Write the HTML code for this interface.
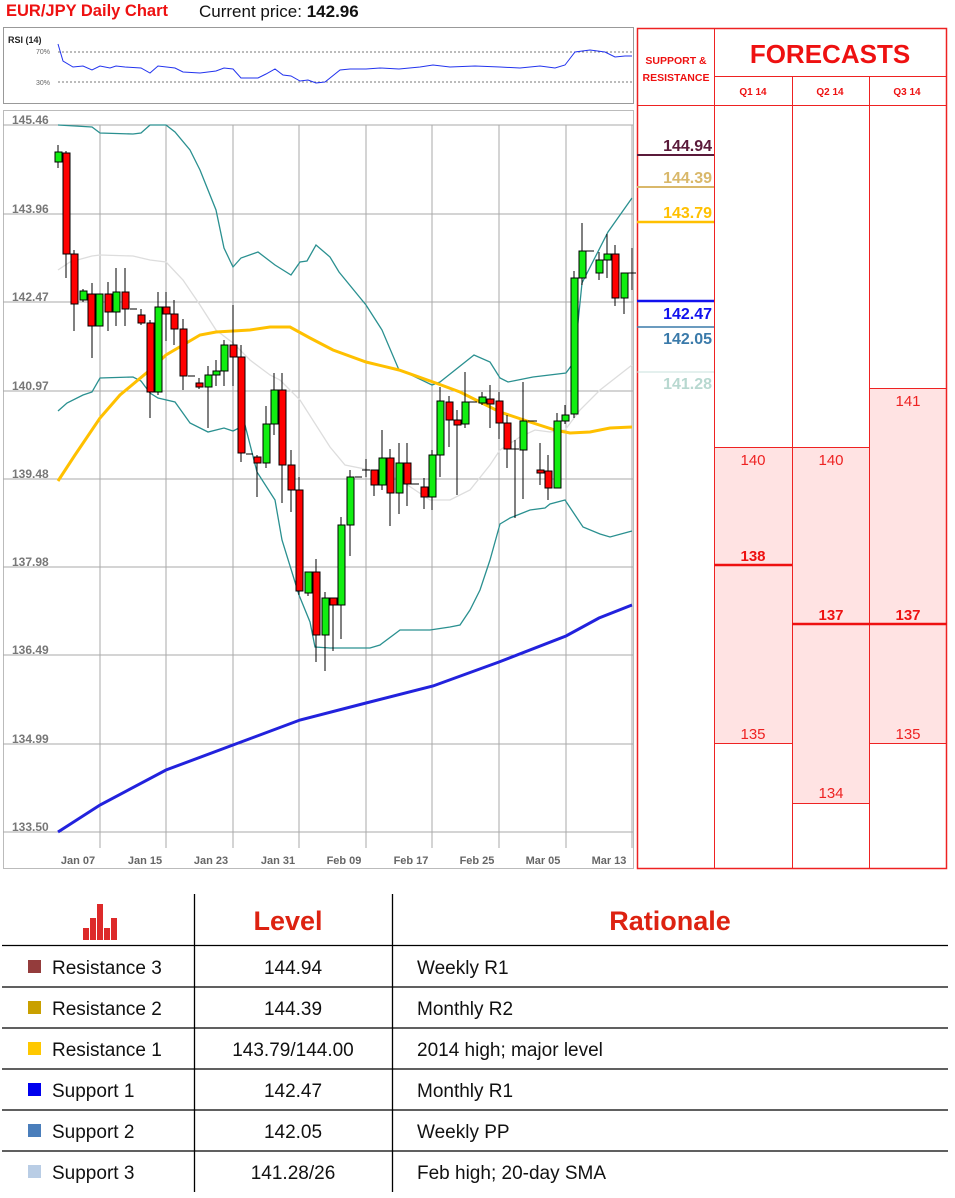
<!DOCTYPE html>
<html><head><meta charset="utf-8"><style>
html,body{margin:0;padding:0;background:#fff;width:955px;height:1198px;overflow:hidden;font-family:"Liberation Sans",sans-serif}
.a{position:absolute}
</style></head><body>
<div class="a" style="left:6px;top:2px;font-size:16.5px;font-weight:bold;color:#ee1111">EUR/JPY Daily Chart</div>
<div class="a" style="left:199px;top:2px;font-size:17px;color:#111">Current price: <b>142.96</b></div>

<svg class="a" style="left:0;top:0" width="955" height="880" xmlns="http://www.w3.org/2000/svg" font-family="Liberation Sans, sans-serif">
<!-- RSI -->
<rect x="3.5" y="27.5" width="630" height="76" fill="#fff" stroke="#999"/>
<text x="8" y="43" font-size="9" font-weight="bold" fill="#222">RSI (14)</text>
<text x="36" y="54" font-size="7" fill="#666">70%</text>
<text x="36" y="85" font-size="7" fill="#666">30%</text>
<line x1="58" y1="52" x2="633" y2="52" stroke="#777" stroke-dasharray="2,2"/>
<line x1="58" y1="82" x2="633" y2="82" stroke="#777" stroke-dasharray="2,2"/>
<polyline fill="none" stroke="#2233ee" stroke-width="1" points="58,44 63,61 73,67 83,66 92,70 100,66 110,68 116,66 125,67 141,68 150,73 158,66 175,68 183,72 200,73 216,71 224,68 233,69 241,78 258,78 266,74 275,69 283,75 291,76 300,81 308,80 316,83 325,82 340,70 350,69 366,69 380,68 399,69 420,67 433,65 450,67 475,66 500,67 520,68 540,66 555,68 565,65 575,52 590,50 605,52 615,57 625,56 632,56"/>
<!-- main chart -->
<rect x="3.5" y="110.5" width="630" height="758" fill="#fff" stroke="#bbb"/>
<g stroke="#aaa" stroke-width="1">
<line x1="3" y1="125" x2="633" y2="125"/><line x1="3" y1="214" x2="633" y2="214"/><line x1="3" y1="302" x2="633" y2="302"/><line x1="3" y1="391" x2="633" y2="391"/><line x1="3" y1="479" x2="633" y2="479"/><line x1="3" y1="567" x2="633" y2="567"/><line x1="3" y1="655" x2="633" y2="655"/><line x1="3" y1="744" x2="633" y2="744"/><line x1="3" y1="832" x2="633" y2="832"/>
<line x1="100" y1="125" x2="100" y2="848"/><line x1="166" y1="125" x2="166" y2="848"/><line x1="233" y1="125" x2="233" y2="848"/><line x1="299" y1="125" x2="299" y2="848"/><line x1="366" y1="125" x2="366" y2="848"/><line x1="432" y1="125" x2="432" y2="848"/><line x1="499" y1="125" x2="499" y2="848"/><line x1="566" y1="125" x2="566" y2="848"/><line x1="632" y1="125" x2="632" y2="848"/>
</g>
<g font-size="12" font-weight="bold" fill="#777">
<text x="12" y="124">145.46</text><text x="12" y="213">143.96</text><text x="12" y="301">142.47</text><text x="12" y="390">140.97</text><text x="12" y="478">139.48</text><text x="12" y="566">137.98</text><text x="12" y="654">136.49</text><text x="12" y="743">134.99</text><text x="12" y="831">133.50</text>
</g>
<g font-size="11" font-weight="bold" fill="#666" text-anchor="middle">
<text x="78" y="864">Jan 07</text><text x="145" y="864">Jan 15</text><text x="211" y="864">Jan 23</text><text x="278" y="864">Jan 31</text><text x="344" y="864">Feb 09</text><text x="411" y="864">Feb 17</text><text x="477" y="864">Feb 25</text><text x="543" y="864">Mar 05</text><text x="609" y="864">Mar 13</text>
</g>
<polyline fill="none" stroke="#ddd" stroke-width="1.3" points="58,270 70,262 92,256 100,255 133,256 150,260 166,262 183,280 200,305 216,330 233,343 250,360 270,375 280,380 300,400 330,447 345,465 370,470 400,480 430,500 450,500 470,490 490,465 500,450 520,437 535,430 550,432 565,430 580,410 600,390 632,365"/>
<polyline fill="none" stroke="#2a9090" stroke-width="1.3" points="58,125 92,127 100,133 133,134 141,133 150,125 166,125 175,132 190,150 200,170 216,210 224,248 233,267 241,258 258,252 275,265 291,275 300,262 307,261 316,245 330,257 339,272 366,305 382,330 399,370 405,372 432,385 440,382 474,355 490,362 500,378 508,382 533,377 566,373 574,362 582,283 608,232 632,198"/>
<polyline fill="none" stroke="#2a9090" stroke-width="1.3" points="58,411 67,403 83,395 92,392 100,378 133,377 141,381 150,393 158,398 175,402 190,423 208,432 224,428 233,431 245,425 257,472 275,500 282,540 299,595 310,622 315,647 330,648 350,648 370,648 380,645 400,630 430,630 450,627 460,625 470,610 480,590 490,560 500,524 510,518 530,510 545,508 550,504 565,500 575,515 583,527 600,534 610,537 632,531"/>
<polyline fill="none" stroke="#ffc000" stroke-width="3" points="58,481 75,455 100,418 120,395 150,370 166,355 183,345 200,335 216,332 233,331 250,330 270,327 290,327 310,338 333,350 366,362 399,370 433,382 460,392 480,402 500,412 530,422 555,430 570,433 590,432 610,428 632,427"/>
<polyline fill="none" stroke="#2222dd" stroke-width="3" points="58,832 100,805 166,770 233,745 300,720 366,703 433,686 499,662 566,636 599,618 632,605"/>
<g stroke="#000" stroke-width="1">
<line x1="58" y1="145" x2="58" y2="168"/><line x1="66" y1="151" x2="66" y2="278"/><line x1="74" y1="250" x2="74" y2="331"/><line x1="83" y1="289" x2="83" y2="302"/><line x1="92" y1="283" x2="92" y2="358"/><line x1="108" y1="282" x2="108" y2="331"/><line x1="116" y1="268" x2="116" y2="326"/><line x1="125" y1="268" x2="125" y2="326"/><line x1="130" y1="309" x2="137" y2="309"/><line x1="141" y1="309" x2="141" y2="325"/><line x1="150" y1="320" x2="150" y2="418"/><line x1="158" y1="292" x2="158" y2="395"/><line x1="166" y1="292" x2="166" y2="341"/><line x1="174" y1="300" x2="174" y2="345"/><line x1="183" y1="319" x2="183" y2="390"/><line x1="188" y1="376" x2="195" y2="376"/><line x1="199" y1="378" x2="199" y2="389"/><line x1="208" y1="366" x2="208" y2="428"/><line x1="216" y1="360" x2="216" y2="386"/><line x1="224" y1="340" x2="224" y2="386"/><line x1="233" y1="305" x2="233" y2="386"/><line x1="241" y1="345" x2="241" y2="462"/><line x1="246" y1="454" x2="253" y2="454"/><line x1="257" y1="455" x2="257" y2="497"/><line x1="266" y1="406" x2="266" y2="468"/><line x1="274" y1="373" x2="274" y2="435"/><line x1="282" y1="373" x2="282" y2="503"/><line x1="291" y1="450" x2="291" y2="512"/><line x1="299" y1="477" x2="299" y2="595"/><line x1="308" y1="572" x2="308" y2="596"/><line x1="316" y1="559" x2="316" y2="662"/><line x1="325" y1="592" x2="325" y2="671"/><line x1="333" y1="598" x2="333" y2="651"/><line x1="341" y1="517" x2="341" y2="639"/><line x1="350" y1="470" x2="350" y2="556"/><line x1="355" y1="477" x2="362" y2="477"/><line x1="366" y1="459" x2="366" y2="477"/><line x1="362" y1="470" x2="370" y2="470"/><line x1="374" y1="470" x2="374" y2="496"/><line x1="382" y1="430" x2="382" y2="490"/><line x1="390" y1="449" x2="390" y2="526"/><line x1="399" y1="443" x2="399" y2="514"/><line x1="407" y1="443" x2="407" y2="506"/><line x1="411" y1="484" x2="419" y2="484"/><line x1="424" y1="478" x2="424" y2="509"/><line x1="432" y1="450" x2="432" y2="510"/><line x1="440" y1="387" x2="440" y2="477"/><line x1="449" y1="396" x2="449" y2="447"/><line x1="457" y1="410" x2="457" y2="495"/><line x1="465" y1="372" x2="465" y2="428"/><line x1="469" y1="402" x2="477" y2="402"/><line x1="482" y1="392" x2="482" y2="405"/><line x1="490" y1="385" x2="490" y2="428"/><line x1="499" y1="392" x2="499" y2="439"/><line x1="507" y1="415" x2="507" y2="468"/><line x1="515" y1="440" x2="515" y2="518"/><line x1="511" y1="449" x2="519" y2="449"/><line x1="523" y1="382" x2="523" y2="499"/><line x1="528" y1="421" x2="537" y2="421"/><line x1="540" y1="443" x2="540" y2="485"/><line x1="548" y1="455" x2="548" y2="500"/><line x1="557" y1="413" x2="557" y2="488"/><line x1="565" y1="405" x2="565" y2="424"/><line x1="574" y1="271" x2="574" y2="418"/><line x1="582" y1="223" x2="582" y2="285"/><line x1="586" y1="251" x2="594" y2="251"/><line x1="599" y1="252" x2="599" y2="280"/><line x1="607" y1="234" x2="607" y2="278"/><line x1="615" y1="245" x2="615" y2="306"/><line x1="624" y1="273" x2="624" y2="314"/><line x1="632" y1="248" x2="632" y2="290"/><line x1="628" y1="273" x2="636" y2="273"/>
</g>
<g stroke="#000" stroke-width="1">
<g fill="#11ee11">
<rect x="55" y="152" width="7" height="10"/><rect x="80" y="291" width="7" height="9"/><rect x="96" y="294" width="7" height="32"/><rect x="113" y="292" width="7" height="20"/><rect x="155" y="307" width="7" height="85"/><rect x="205" y="375" width="7" height="12"/><rect x="213" y="371" width="7" height="4"/><rect x="221" y="345" width="7" height="26"/><rect x="263" y="424" width="7" height="39"/><rect x="271" y="390" width="7" height="34"/><rect x="305" y="572" width="7" height="21"/><rect x="322" y="598" width="7" height="37"/><rect x="338" y="525" width="7" height="80"/><rect x="347" y="477" width="7" height="48"/><rect x="379" y="458" width="7" height="27"/><rect x="396" y="463" width="7" height="30"/><rect x="429" y="455" width="7" height="42"/><rect x="437" y="401" width="7" height="54"/><rect x="462" y="402" width="7" height="22"/><rect x="479" y="397" width="7" height="6"/><rect x="520" y="421" width="7" height="29"/><rect x="554" y="421" width="7" height="67"/><rect x="562" y="415" width="7" height="6"/><rect x="571" y="278" width="7" height="136"/><rect x="579" y="251" width="7" height="27"/><rect x="596" y="260" width="7" height="13"/><rect x="604" y="254" width="7" height="6"/><rect x="621" y="273" width="7" height="25"/>
</g>
<g fill="#ff0000">
<rect x="63" y="153" width="7" height="101"/><rect x="71" y="254" width="7" height="50"/><rect x="88" y="294" width="7" height="32"/><rect x="105" y="294" width="7" height="18"/><rect x="122" y="292" width="7" height="17"/><rect x="138" y="315" width="7" height="8"/><rect x="147" y="323" width="7" height="69"/><rect x="163" y="307" width="7" height="7"/><rect x="171" y="314" width="7" height="15"/><rect x="180" y="329" width="7" height="47"/><rect x="196" y="383" width="7" height="4"/><rect x="230" y="345" width="7" height="12"/><rect x="238" y="357" width="7" height="96"/><rect x="254" y="457" width="7" height="6"/><rect x="279" y="390" width="7" height="75"/><rect x="288" y="465" width="7" height="25"/><rect x="296" y="490" width="7" height="101"/><rect x="313" y="572" width="7" height="63"/><rect x="330" y="598" width="7" height="7"/><rect x="371" y="470" width="7" height="15"/><rect x="387" y="458" width="7" height="35"/><rect x="404" y="463" width="7" height="21"/><rect x="421" y="487" width="7" height="10"/><rect x="446" y="402" width="7" height="18"/><rect x="454" y="420" width="7" height="5"/><rect x="487" y="399" width="7" height="5"/><rect x="496" y="401" width="7" height="22"/><rect x="504" y="423" width="7" height="26"/><rect x="537" y="470" width="7" height="3"/><rect x="545" y="471" width="7" height="17"/><rect x="612" y="254" width="7" height="44"/>
</g></g>

<!-- right table -->
<rect x="714" y="447" width="78" height="296" fill="#ffe3e3"/>
<rect x="792" y="447" width="77" height="356" fill="#ffe3e3"/>
<rect x="869" y="388" width="77" height="355" fill="#ffe3e3"/>
<g stroke="#ee2222" stroke-width="1" fill="none">
<rect x="637.5" y="28.5" width="309" height="840" stroke-width="1.5"/>
<line x1="714.5" y1="28" x2="714.5" y2="869"/>
<line x1="714" y1="76.5" x2="947" y2="76.5"/>
<line x1="637" y1="105.5" x2="947" y2="105.5"/>
<line x1="792.5" y1="76" x2="792.5" y2="869"/>
<line x1="869.5" y1="76" x2="869.5" y2="869"/>
<line x1="714" y1="447.5" x2="869" y2="447.5"/>
<line x1="869" y1="388.5" x2="947" y2="388.5"/>
<line x1="714" y1="743.5" x2="792" y2="743.5"/>
<line x1="869" y1="743.5" x2="947" y2="743.5"/>
<line x1="792" y1="803.5" x2="869" y2="803.5"/>
</g>
<g stroke="#ee1111" stroke-width="2.5">
<line x1="714" y1="565" x2="792" y2="565"/><line x1="792" y1="624" x2="947" y2="624"/>
</g>
<g fill="#ee1111" font-weight="bold" text-anchor="middle">
<text x="676" y="64" font-size="10.5">SUPPORT &amp;</text>
<text x="676" y="81" font-size="10.5">RESISTANCE</text>
<text x="830" y="63" font-size="26">FORECASTS</text>
<text x="753" y="95" font-size="10">Q1 14</text><text x="830" y="95" font-size="10">Q2 14</text><text x="907" y="95" font-size="10">Q3 14</text>
<text x="753" y="561" font-size="15">138</text><text x="831" y="620" font-size="15">137</text><text x="908" y="620" font-size="15">137</text>
</g>
<g fill="#ee2222" font-size="15" text-anchor="middle">
<text x="753" y="465">140</text><text x="831" y="465">140</text><text x="908" y="406">141</text>
<text x="753" y="739">135</text><text x="831" y="798">134</text><text x="908" y="739">135</text>
</g>
<g font-size="16" font-weight="bold" text-anchor="end">
<text x="712" y="151" fill="#5a1a3a">144.94</text>
<text x="712" y="183" fill="#d9b86a">144.39</text>
<text x="712" y="218" fill="#ffc000">143.79</text>
<text x="712" y="319" fill="#1111ee">142.47</text>
<text x="712" y="344" fill="#3a7aaa">142.05</text>
<text x="712" y="389" fill="#b8d8d0">141.28</text>
</g>
<line x1="637" y1="155" x2="714" y2="155" stroke="#5a1a3a" stroke-width="2"/>
<line x1="637" y1="187" x2="714" y2="187" stroke="#d9b86a" stroke-width="2"/>
<line x1="637" y1="222" x2="714" y2="222" stroke="#ffc000" stroke-width="2.5"/>
<line x1="637" y1="301" x2="714" y2="301" stroke="#1111ee" stroke-width="2.5"/>
<line x1="637" y1="327" x2="714" y2="327" stroke="#3a7aaa" stroke-width="1.5"/>
<line x1="637" y1="372" x2="714" y2="372" stroke="#c8e0dc" stroke-width="1"/>
</svg>

<!-- bottom table -->
<svg class="a" style="left:0;top:880px" width="955" height="318" xmlns="http://www.w3.org/2000/svg" font-family="Liberation Sans, sans-serif">
<g fill="#dd2a2a">
<rect x="83" y="48" width="6" height="12"/><rect x="90" y="38" width="6" height="22"/><rect x="97" y="24" width="6" height="36"/><rect x="104" y="48" width="6" height="12"/><rect x="111" y="38" width="6" height="22"/>
</g>
<g stroke="#000" stroke-width="1.3">
<line x1="194.5" y1="14" x2="194.5" y2="312"/><line x1="392.5" y1="14" x2="392.5" y2="312"/>
<line x1="2" y1="65.5" x2="948" y2="65.5"/><line x1="2" y1="107" x2="948" y2="107"/><line x1="2" y1="148" x2="948" y2="148"/><line x1="2" y1="189" x2="948" y2="189"/><line x1="2" y1="230" x2="948" y2="230"/><line x1="2" y1="271" x2="948" y2="271"/>
</g>
<g fill="#dd2211" font-weight="900" font-size="27" text-anchor="middle">
<text x="288" y="50">Level</text><text x="670" y="50">Rationale</text>
</g>
<rect x="28" y="80" width="13" height="13" fill="#943c3c"/>
<rect x="28" y="121" width="13" height="13" fill="#c9a000"/>
<rect x="28" y="162" width="13" height="13" fill="#ffc800"/>
<rect x="28" y="203" width="13" height="13" fill="#0000ee"/>
<rect x="28" y="244" width="13" height="13" fill="#4a7ebb"/>
<rect x="28" y="285" width="13" height="13" fill="#b9cde5"/>
<g font-size="19" fill="#111">
<text x="52" y="94">Resistance 3</text><text x="52" y="135">Resistance 2</text><text x="52" y="176">Resistance 1</text><text x="52" y="217">Support 1</text><text x="52" y="258">Support 2</text><text x="52" y="299">Support 3</text>
<g text-anchor="middle">
<text x="293" y="94">144.94</text><text x="293" y="135">144.39</text><text x="293" y="176">143.79/144.00</text><text x="293" y="217">142.47</text><text x="293" y="258">142.05</text><text x="293" y="299">141.28/26</text>
</g>
<text x="417" y="94">Weekly R1</text><text x="417" y="135">Monthly R2</text><text x="417" y="176">2014 high; major level</text><text x="417" y="217">Monthly R1</text><text x="417" y="258">Weekly PP</text><text x="417" y="299">Feb high; 20-day SMA</text>
</g>
</svg>
</body></html>
